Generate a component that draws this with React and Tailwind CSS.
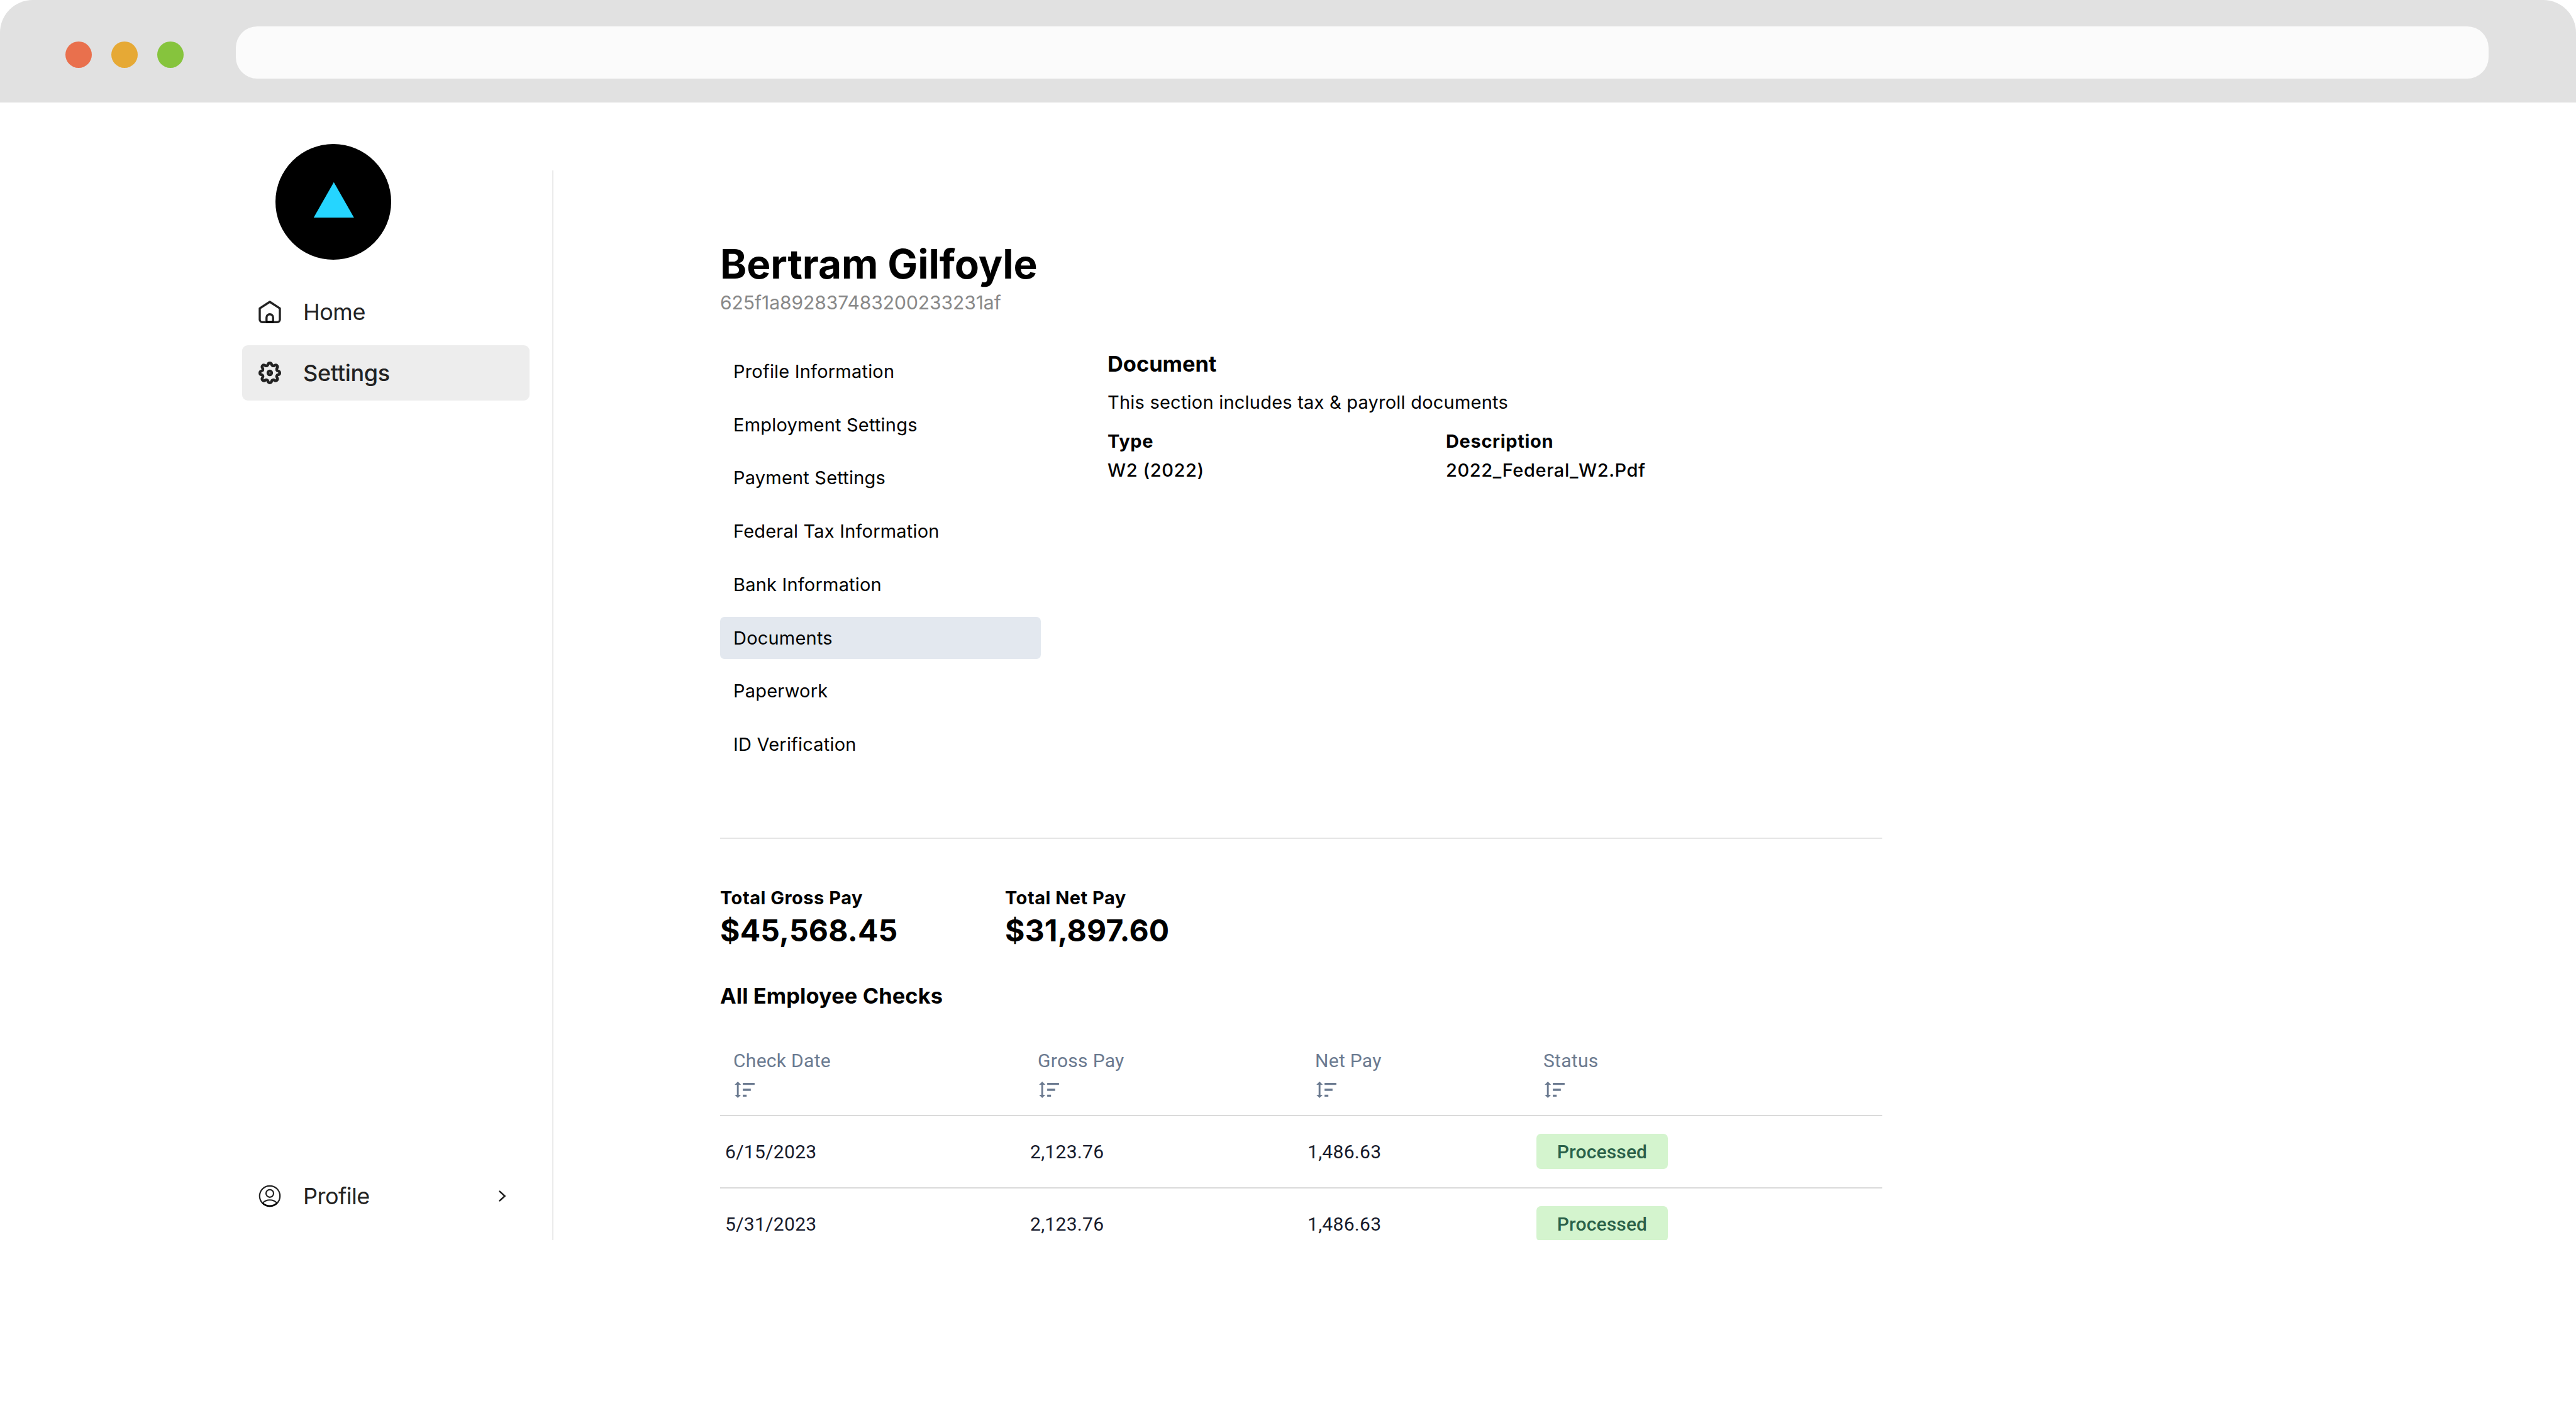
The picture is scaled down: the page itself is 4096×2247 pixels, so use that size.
import clsx from "clsx";

function HomeIcon() {
  return (
    <svg viewBox="0 0 36 36" className="w-9 h-9" fill="none" stroke="currentColor" strokeWidth="3.4" strokeLinejoin="round">
      <path d="M18 2 L34 12.4 V30 a4.2 4.2 0 0 1 -4.2 4.2 H6.2 A4.2 4.2 0 0 1 2 30 V12.4 Z" />
      <path d="M12.8 34 V27 a5.2 5.2 0 0 1 10.4 0 V34 Z" />
      <path d="M12 34.2 H24" stroke="#000" />
    </svg>
  );
}

function GearIcon() {
  return (
    <svg viewBox="0 0 36 36" className="w-9 h-9 overflow-visible" fill="none" stroke="currentColor" strokeWidth="4.5" strokeLinejoin="round">
      <path d="M15.2 4.4 a2.9 2.9 0 0 1 5.6 0 a2.9 2.9 0 0 0 4.5 1.9 a2.9 2.9 0 0 1 4.2 4.1 a2.9 2.9 0 0 0 1.9 4.7 a2.9 2.9 0 0 1 0 5.7 a2.9 2.9 0 0 0 -1.9 4.7 a2.9 2.9 0 0 1 -4.2 4.1 a2.9 2.9 0 0 0 -4.5 1.9 a2.9 2.9 0 0 1 -5.6 0 a2.9 2.9 0 0 0 -4.5 -1.9 a2.9 2.9 0 0 1 -4.2 -4.1 a2.9 2.9 0 0 0 -1.9 -4.7 a2.9 2.9 0 0 1 0 -5.7 a2.9 2.9 0 0 0 1.9 -4.7 a2.9 2.9 0 0 1 4.2 -4.1 a2.9 2.9 0 0 0 4.5 -1.9 Z" />
      <circle cx="18" cy="18" r="2.9" />
    </svg>
  );
}

function ProfileIcon() {
  return (
    <svg viewBox="0 0 36 36" className="w-9 h-9" fill="none" stroke="currentColor" strokeWidth="2.2">
      <circle cx="18" cy="18" r="16.2" />
      <circle cx="18" cy="13.8" r="6" />
      <path d="M6.6 29.2 C12.4 22.6 23.6 22.6 29.4 29.2" />
      <path d="M6.6 29.2 A16.2 16.2 0 0 0 29.4 29.2" stroke="#000" strokeWidth="2.6" />
    </svg>
  );
}

function SortIcon() {
  return (
    <svg viewBox="0 0 110 90" className="w-8 h-[26px]" fill="currentColor">
      <path d="M17.5 0 L35 17 H22.5 V73 H35 L17.5 90 L0 73 H12.5 V17 H0 Z" />
      <rect x="45" y="7" width="65" height="11" />
      <rect x="45" y="39" width="44" height="12" />
      <rect x="45" y="72" width="21" height="11" />
    </svg>
  );
}

function BrowserBar() {
  return (
    <header className="h-[163px] shrink-0 flex items-start bg-[#e1e1e1] rounded-t-[52px] pl-[104px] pr-[139px]">
      <div className="flex gap-[31px] mt-[66px]">
        <span className="size-[42px] rounded-full bg-[#e9704d]" />
        <span className="size-[42px] rounded-full bg-[#e6a935]" />
        <span className="size-[42px] rounded-full bg-[#86c43d]" />
      </div>
      <div className="flex-1 h-[83px] mt-[42px] ml-[83px] rounded-[34px] bg-[#fbfbfb]" />
    </header>
  );
}

function NavItem({ icon, label, active, children }) {
  return (
    <a
      className={clsx(
        "flex items-center h-[88px] w-[457px] pl-[26px] rounded-[9px] text-[36px] text-[#222222]",
        active ? "bg-[#ededed] font-medium tracking-[-0.3px]" : "tracking-[-0.5px]"
      )}
    >
      {icon}
      <span className="ml-[35px]">{label}</span>
      {children}
    </a>
  );
}

function Sidebar() {
  return (
    <aside className="w-[457px] ml-[385px] pt-[66px] pb-[26px] flex flex-col">
      <svg viewBox="0 0 184 184" className="size-[184px] ml-[53px]">
        <circle cx="92" cy="92" r="92" fill="#000" />
        <path d="M92.8 60.8 L124.8 117 H60.8 Z" fill="#25d5ff" />
      </svg>
      <nav className="mt-[39px] flex flex-col gap-[9px]">
        <NavItem icon={<HomeIcon />} label="Home" />
        <NavItem icon={<GearIcon />} label="Settings" active />
      </nav>
      <div className="mt-auto">
        <NavItem icon={<ProfileIcon />} label="Profile">
          <svg viewBox="0 0 12 20" className="w-3 h-5 ml-auto mr-[37px]" fill="none" stroke="currentColor" strokeWidth="2.6" strokeLinecap="round">
            <path d="M1.6 2.6 L9.6 10 L1.6 17.4" />
          </svg>
        </NavItem>
      </div>
    </aside>
  );
}

const sections = [
  "Profile Information",
  "Employment Settings",
  "Payment Settings",
  "Federal Tax Information",
  "Bank Information",
  "Documents",
  "Paperwork",
  "ID Verification",
];

function SectionMenu({ current }) {
  return (
    <ul className="w-[510px] flex flex-col gap-[17.35px]">
      {sections.map((name) => (
        <li
          key={name}
          className={clsx(
            "h-[67.4px] flex items-center pl-[21px] rounded-[7px] text-[29px] tracking-[0.2px]",
            name === current && "bg-[#e3e8ef]"
          )}
        >
          {name}
        </li>
      ))}
    </ul>
  );
}

function DocumentPanel() {
  return (
    <section className="ml-[106px] text-[29px]">
      <h2 className="text-[34.4px] leading-[44px] font-bold">Document</h2>
      <p className="mt-[17px] leading-[44px] tracking-[0.22px]">This section includes tax &amp; payroll documents</p>
      <div className="mt-[17px] grid grid-cols-[538px_1fr] leading-[46px]">
        <span className="font-bold tracking-[0.65px]">Type</span>
        <span className="font-bold tracking-[0.65px]">Description</span>
        <span className="font-medium tracking-[0.6px]">W2 (2022)</span>
        <span className="font-medium tracking-[0.6px]">2022_Federal_W2.Pdf</span>
      </div>
    </section>
  );
}

function Total({ label, value }) {
  return (
    <div className="w-[453px] font-bold">
      <div className="text-[29px] leading-[44px] tracking-[0.5px]">{label}</div>
      <div className="text-[48px] leading-[60px] tracking-[0.2px]">{value}</div>
    </div>
  );
}

const columns = ["Check Date", "Gross Pay", "Net Pay", "Status"];

const checks = [
  { date: "6/15/2023", gross: "2,123.76", net: "1,486.63", status: "Processed" },
  { date: "5/31/2023", gross: "2,123.76", net: "1,486.63", status: "Processed" },
];

function ChecksTable() {
  return (
    <div className="mt-[59px] font-['Roboto',sans-serif] text-[30px]">
      <div className="h-[110px] grid grid-cols-[484px_441px_363px_1fr] border-b-2 border-[#dadada] text-[#6b7a90]">
        {columns.map((name) => (
          <div key={name} className="pl-[21px]">
            <div className="leading-[44px] tracking-[0.3px]">{name}</div>
            <div className="mt-[11px] ml-[2px]">
              <SortIcon />
            </div>
          </div>
        ))}
      </div>
      {checks.map((check) => (
        <div
          key={check.date}
          className="h-[115px] grid grid-cols-[484px_441px_363px_1fr] items-center border-b-2 border-[#dadada] text-[#171b2c]"
        >
          <span className="pl-[8px] tracking-[0.3px]">{check.date}</span>
          <span className="pl-[9px] tracking-[0.3px]">{check.gross}</span>
          <span className="pl-[9px] tracking-[0.3px]">{check.net}</span>
          <span className="ml-[10px] w-[209px] h-[56px] flex items-center justify-center rounded-[7px] bg-[#d4f4ce] text-[#2b6149] font-medium tracking-[0.15px]">
            {check.status}
          </span>
        </div>
      ))}
    </div>
  );
}

function EmployeePage() {
  return (
    <main className="w-[1848px] ml-[265px] pt-[221px] text-black">
      <h1 className="text-[64px] leading-[72px] font-bold tracking-[-0.1px]">Bertram Gilfoyle</h1>
      <p className="mt-[4px] text-[30px] leading-[42px] tracking-[-0.05px] text-[#888888]">625f1a892837483200233231af</p>

      <div className="mt-[55px] flex">
        <SectionMenu current="Documents" />
        <DocumentPanel />
      </div>

      <hr className="mt-[114px] border-t-2 border-[#e5e5e5]" />

      <div className="mt-[72px] flex">
        <Total label="Total Gross Pay" value="$45,568.45" />
        <Total label="Total Net Pay" value="$31,897.60" />
      </div>

      <h2 className="mt-[52px] text-[34.4px] leading-[44px] font-bold tracking-[0.1px]">All Employee Checks</h2>
      <ChecksTable />
    </main>
  );
}

function App() {
  return (
    <div className="w-[4096px] h-[2247px] flex flex-col overflow-hidden bg-white font-['Inter',sans-serif]">
      <BrowserBar />
      <div className="h-[1809px] flex overflow-hidden">
        <Sidebar />
        <div className="w-[2px] ml-[36px] mt-[108px] bg-[#ebebeb]" />
        <EmployeePage />
      </div>
    </div>
  );
}

export default App;
